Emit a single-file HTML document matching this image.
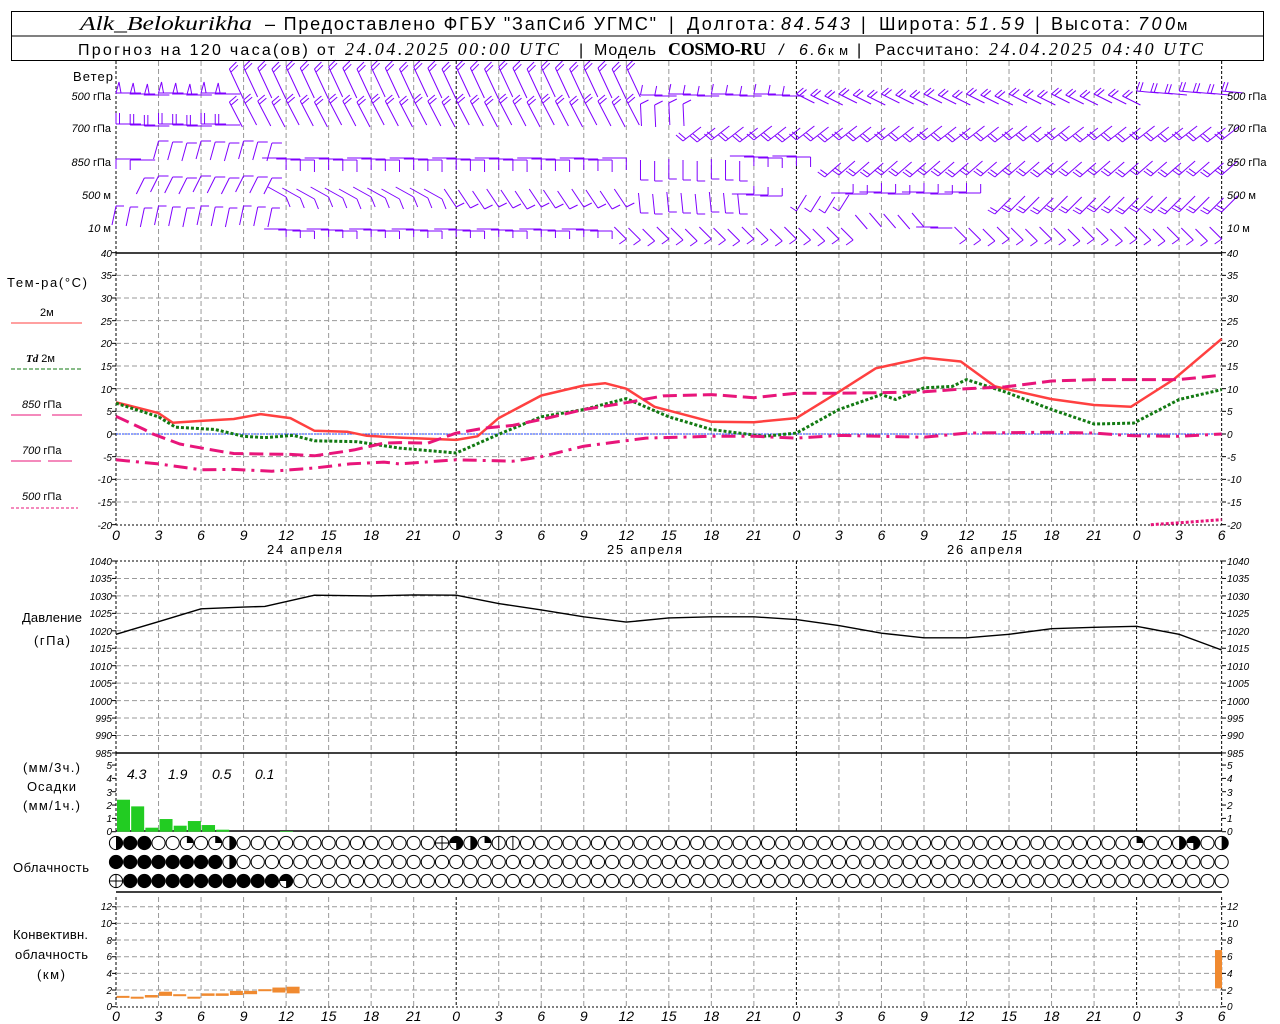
<!DOCTYPE html>
<html><head><meta charset="utf-8"><style>
html,body{margin:0;padding:0;background:#fff;width:1280px;height:1024px;overflow:hidden}
svg{display:block}
text{font-family:"Liberation Sans","DejaVu Sans",sans-serif;fill:#000}
.t{font-size:13px}
.n{font-size:10px;font-style:italic}
.h{font-size:14px;font-style:italic}
.it{font-style:italic}
</style></head><body>
<svg id="s" width="1280" height="1024" viewBox="0 0 1280 1024" xmlns="http://www.w3.org/2000/svg">
<rect x="0" y="0" width="1280" height="1024" fill="#fff"/>
<g id="g"></g>
<!-- header -->
<rect x="11.5" y="11.5" width="1252" height="49" fill="none" stroke="#000"/>
<line x1="11" y1="36" x2="1264" y2="36" stroke="#000"/>
<g style="font-size:18px">
<text x="80" y="30" textLength="172" lengthAdjust="spacingAndGlyphs" style="font-family:'Liberation Serif',serif;font-style:italic;font-size:20px">Alk_Belokurikha</text>
<text x="265" y="30" textLength="391" lengthAdjust="spacing">– Предоставлено ФГБУ "ЗапСиб УГМС"</text>
<text x="669" y="30">|</text>
<text x="687" y="30" textLength="88" lengthAdjust="spacing">Долгота:</text>
<text x="781" y="30" textLength="69" lengthAdjust="spacing" class="it">84.543</text>
<text x="861" y="30">|</text>
<text x="879" y="30" textLength="81" lengthAdjust="spacing">Широта:</text>
<text x="966" y="30" textLength="58" lengthAdjust="spacing" class="it">51.59</text>
<text x="1035" y="30">|</text>
<text x="1051" y="30" textLength="79" lengthAdjust="spacing">Высота:</text>
<text x="1138" y="30" textLength="37" lengthAdjust="spacing" class="it">700</text>
<text x="1177" y="30" style="font-size:15px">м</text>
</g>
<g style="font-size:16px">
<text x="78" y="55" textLength="257" lengthAdjust="spacing">Прогноз на 120 часа(ов) от</text>
<text x="345" y="55" textLength="214" lengthAdjust="spacing" style="font-family:'Liberation Serif',serif;font-style:italic;font-size:18px">24.04.2025 00:00 UTC</text>
<text x="579" y="55">|</text>
<text x="594" y="55" textLength="62" lengthAdjust="spacing">Модель</text>
<text x="668" y="55" textLength="98" lengthAdjust="spacing" style="font-family:'Liberation Serif',serif;font-weight:bold;font-size:18px">COSMO-RU</text>
<text x="779" y="55" class="it">/</text>
<text x="799" y="55" textLength="27" lengthAdjust="spacing" class="it">6.6</text>
<text x="828" y="55" textLength="20" lengthAdjust="spacing" style="font-size:13px">км</text>
<text x="857" y="55">|</text>
<text x="875" y="55" textLength="104" lengthAdjust="spacing">Рассчитано:</text>
<text x="989" y="55" textLength="214" lengthAdjust="spacing" style="font-family:'Liberation Serif',serif;font-style:italic;font-size:18px">24.04.2025 04:40 UTC</text>
</g>
<!-- wind labels -->
<g class="t">
<text x="73" y="81" textLength="40" lengthAdjust="spacing">Ветер</text>
<text x="111" y="100" text-anchor="end" style="font-size:11px"><tspan class="it">500</tspan> гПа</text>
<text x="111" y="132" text-anchor="end" style="font-size:11px"><tspan class="it">700</tspan> гПа</text>
<text x="111" y="166" text-anchor="end" style="font-size:11px"><tspan class="it">850</tspan> гПа</text>
<text x="111" y="199" text-anchor="end" style="font-size:11px"><tspan class="it">500</tspan> м</text>
<text x="111" y="232" text-anchor="end" style="font-size:11px"><tspan class="it">10</tspan>   м</text>
<text x="1227" y="100" style="font-size:11px"><tspan class="it">500</tspan> гПа</text>
<text x="1227" y="132" style="font-size:11px"><tspan class="it">700</tspan> гПа</text>
<text x="1227" y="166" style="font-size:11px"><tspan class="it">850</tspan> гПа</text>
<text x="1227" y="199" style="font-size:11px"><tspan class="it">500</tspan>  м</text>
<text x="1227" y="232" style="font-size:11px"><tspan class="it">10</tspan>   м</text>
</g>
<!-- temp legend -->
<g class="t">
<text x="7" y="287" textLength="80" lengthAdjust="spacing">Тем-ра(°C)</text>
<text x="40" y="316" style="font-size:11px">2м</text>
<text x="26" y="362" style="font-size:11px"><tspan style="font-family:'Liberation Serif',serif;font-style:italic;font-weight:bold">Td</tspan>  2м</text>
<text x="22" y="408" style="font-size:11px"><tspan class="it">850</tspan> гПа</text>
<text x="22" y="454" style="font-size:11px"><tspan class="it">700</tspan> гПа</text>
<text x="22" y="500" style="font-size:11px"><tspan class="it">500</tspan> гПа</text>
<text x="22" y="622" textLength="60" lengthAdjust="spacing">Давление</text>
<text x="34" y="645" textLength="36" lengthAdjust="spacing">(гПа)</text>
<text x="23" y="772" textLength="57" lengthAdjust="spacing">(мм/3ч.)</text>
<text x="27" y="791" textLength="49" lengthAdjust="spacing">Осадки</text>
<text x="23" y="810" textLength="57" lengthAdjust="spacing">(мм/1ч.)</text>
<text x="13" y="872" textLength="76" lengthAdjust="spacing">Облачность</text>
<text x="13" y="939" textLength="75" lengthAdjust="spacing">Конвективн.</text>
<text x="15" y="959" textLength="73" lengthAdjust="spacing">облачность</text>
<text x="37" y="979" textLength="28" lengthAdjust="spacing">(км)</text>
<text x="267" y="554" textLength="75" lengthAdjust="spacing">24 апреля</text>
<text x="607" y="554" textLength="75" lengthAdjust="spacing">25 апреля</text>
<text x="947" y="554" textLength="75" lengthAdjust="spacing">26 апреля</text>
</g>
<g class="h">
<text x="127" y="779">4.3</text><text x="168" y="779">1.9</text><text x="212" y="779">0.5</text><text x="255" y="779">0.1</text>
</g>
<!-- time labels -->
<g class="h" text-anchor="middle">
<text y="540"><tspan x="116">0</tspan><tspan x="158.5">3</tspan><tspan x="201">6</tspan><tspan x="243.6">9</tspan><tspan x="286.1">12</tspan><tspan x="328.6">15</tspan><tspan x="371.2">18</tspan><tspan x="413.7">21</tspan><tspan x="456.2">0</tspan><tspan x="498.7">3</tspan><tspan x="541.3">6</tspan><tspan x="583.8">9</tspan><tspan x="626.3">12</tspan><tspan x="668.8">15</tspan><tspan x="711.4">18</tspan><tspan x="753.9">21</tspan><tspan x="796.4">0</tspan><tspan x="838.9">3</tspan><tspan x="881.5">6</tspan><tspan x="924">9</tspan><tspan x="966.5">12</tspan><tspan x="1009">15</tspan><tspan x="1051.6">18</tspan><tspan x="1094">21</tspan><tspan x="1136.6">0</tspan><tspan x="1179">3</tspan><tspan x="1221.7">6</tspan></text>
<text y="1021"><tspan x="116">0</tspan><tspan x="158.5">3</tspan><tspan x="201">6</tspan><tspan x="243.6">9</tspan><tspan x="286.1">12</tspan><tspan x="328.6">15</tspan><tspan x="371.2">18</tspan><tspan x="413.7">21</tspan><tspan x="456.2">0</tspan><tspan x="498.7">3</tspan><tspan x="541.3">6</tspan><tspan x="583.8">9</tspan><tspan x="626.3">12</tspan><tspan x="668.8">15</tspan><tspan x="711.4">18</tspan><tspan x="753.9">21</tspan><tspan x="796.4">0</tspan><tspan x="838.9">3</tspan><tspan x="881.5">6</tspan><tspan x="924">9</tspan><tspan x="966.5">12</tspan><tspan x="1009">15</tspan><tspan x="1051.6">18</tspan><tspan x="1094">21</tspan><tspan x="1136.6">0</tspan><tspan x="1179">3</tspan><tspan x="1221.7">6</tspan></text>
</g>
<!-- y tick labels -->
<g class="n" text-anchor="end">
<text x="112" y="257">40</text><text x="112" y="279">35</text><text x="112" y="302">30</text><text x="112" y="325">25</text><text x="112" y="347">20</text><text x="112" y="370">15</text><text x="112" y="393">10</text><text x="112" y="415">5</text><text x="112" y="438">0</text><text x="112" y="461">-5</text><text x="112" y="483">-10</text><text x="112" y="506">-15</text><text x="112" y="529">-20</text>
<text x="112" y="565">1040</text><text x="112" y="582">1035</text><text x="112" y="600">1030</text><text x="112" y="617">1025</text><text x="112" y="635">1020</text><text x="112" y="652">1015</text><text x="112" y="670">1010</text><text x="112" y="687">1005</text><text x="112" y="705">1000</text><text x="112" y="722">995</text><text x="112" y="739">990</text><text x="112" y="757">985</text>
<text x="112" y="769">5</text><text x="112" y="782">4</text><text x="112" y="796">3</text><text x="112" y="809">2</text><text x="112" y="822">1</text><text x="112" y="835">0</text>
<text x="112" y="910">12</text><text x="112" y="927">10</text><text x="112" y="944">8</text><text x="112" y="960">6</text><text x="112" y="977">4</text><text x="112" y="994">2</text><text x="112" y="1010">0</text>
</g>
<g class="n">
<text x="1227" y="257">40</text><text x="1227" y="279">35</text><text x="1227" y="302">30</text><text x="1227" y="325">25</text><text x="1227" y="347">20</text><text x="1227" y="370">15</text><text x="1227" y="393">10</text><text x="1227" y="415">5</text><text x="1227" y="438">0</text><text x="1227" y="461">-5</text><text x="1227" y="483">-10</text><text x="1227" y="506">-15</text><text x="1227" y="529">-20</text>
<text x="1227" y="565">1040</text><text x="1227" y="582">1035</text><text x="1227" y="600">1030</text><text x="1227" y="617">1025</text><text x="1227" y="635">1020</text><text x="1227" y="652">1015</text><text x="1227" y="670">1010</text><text x="1227" y="687">1005</text><text x="1227" y="705">1000</text><text x="1227" y="722">995</text><text x="1227" y="739">990</text><text x="1227" y="757">985</text>
<text x="1227" y="769">5</text><text x="1227" y="782">4</text><text x="1227" y="796">3</text><text x="1227" y="809">2</text><text x="1227" y="822">1</text><text x="1227" y="835">0</text>
<text x="1227" y="910">12</text><text x="1227" y="927">10</text><text x="1227" y="944">8</text><text x="1227" y="960">6</text><text x="1227" y="977">4</text><text x="1227" y="994">2</text><text x="1227" y="1010">0</text>
</g>
</svg>
<script>
(function(){
var NS="http://www.w3.org/2000/svg",g=document.getElementById("g");
function el(n,a){var e=document.createElementNS(NS,n);for(var k in a)e.setAttribute(k,a[k]);g.appendChild(e);return e;}
function X(h){return 116+h*14.175;}
function ln(x1,y1,x2,y2,c,w,d){var a={x1:x1,y1:y1,x2:x2,y2:y2,stroke:c,"stroke-width":w||1};if(d)a["stroke-dasharray"]=d;return el("line",a);}
var GR="#9a9a9a";
var panels=[[61,253],[253,525],[561,753],[753,831],[897,1007]];
for(var h=0;h<=78;h+=3){var day=(h%24==0||h==78);
 panels.forEach(function(p){ln(X(h),p[0],X(h),p[1],day?"#000":GR,1,day?"3,2":"5,3");});}
for(var t=35;t>=-15;t-=5){var y=434-t*4.533;ln(116,y,1222,y,GR,1,"5,3");}
ln(116,525,1222,525,"#000",1,"2,2");
for(var p=1035;p>=990;p-=5){var y=561+(1040-p)*3.49;ln(116,y,1222,y,GR,1,"5,3");}
ln(116,561,1222,561,"#000",1,"2,2");
for(var c=2;c<=12;c+=2){var y=1006.7-c*8.33;ln(116,y,1222,y,GR,1,"5,3");}
ln(116,1007,1222,1007,"#000",1,"2,2");
[253,753,831,892].forEach(function(y){ln(116,y,1222,y,"#000",1.5);});
function ticks(vals,f){vals.forEach(function(v){var y=f(v);ln(112,y,116,y,"#000");ln(1222,y,1226,y,"#000");});}
ticks([40,35,30,25,20,15,10,5,0,-5,-10,-15,-20],function(t){return 434-t*4.533;});
ticks([1040,1035,1030,1025,1020,1015,1010,1005,1000,995,990,985],function(p){return 561+(1040-p)*3.49;});
ticks([0,1,2,3,4,5],function(v){return 831.7-v*13.33;});
ticks([0,2,4,6,8,10,12],function(v){return 1006.7-v*8.33;});
ln(116,434,1222,434,"#2244ff",1,"2,1");
ln(11,323,82,323,"#ff4040",1);
ln(11,369,82,369,"#127a12",1,"4,2");
ln(11,415,41,415,"#e8157a",1);ln(52,415,82,415,"#e8157a",1);
ln(11,461,42,461,"#e8157a",1,"30,6,2,6");ln(48,461,78,461,"#e8157a",1,"24,6,2,6");
ln(11,508,78,508,"#e8157a",1,"3,2");
function curve(pts,c,w,d,f){var s="";pts.forEach(function(q){s+=X(q[0]).toFixed(1)+","+f(q[1]).toFixed(1)+" ";});
 var a={points:s,fill:"none",stroke:c,"stroke-width":w,"stroke-linejoin":"round"};if(d)a["stroke-dasharray"]=d;el("polyline",a);}
var TY=function(t){return 434-t*4.533;};
curve([[0,7],[3,4.6],[4,2.5],[6,2.9],[8.3,3.3],[10.2,4.4],[12.3,3.5],[14,0.7],[16.3,0.5],[17.7,-0.4],[20,-0.8],[24,-1.3],[25.5,-0.5],[27,3.5],[30,8.5],[33,10.7],[34.5,11.2],[36,10],[38,6],[42,2.7],[45,2.6],[48,3.5],[51,9.3],[53.6,14.5],[57,16.8],[59.6,16],[62,10.5],[66,7.7],[69,6.4],[71.6,6],[74.6,12],[78,21]],"#ff4040",2.5,null,TY);
curve([[0,6.8],[3,3.8],[4.2,1.5],[7,1],[9,-0.5],[10.5,-0.8],[12.5,-0.3],[14,-1.5],[17,-1.7],[20,-3.1],[24,-4.2],[27.2,0.2],[30,3.8],[33,5.4],[36,7.8],[39,3.8],[42,1],[45.7,-0.5],[48,0.2],[51,5.4],[54,8.7],[55,7.6],[57,10.2],[59,10.5],[60,12],[62.7,9.3],[66,5.4],[69,2.2],[71.8,2.4],[75,7.6],[78,9.8]],"#127a12",3,"3,2",TY);
curve([[0,3.9],[2,1],[2.6,0],[4.5,-2.2],[5.5,-2.8],[7.3,-3.8],[8.3,-4.3],[12.3,-4.5],[14,-4.8],[16,-3.9],[16.8,-3.5],[18.9,-2],[20,-1.9],[22,-2],[24,0.2],[26,1.3],[28,1.9],[30,3.2],[33,5.4],[36,6.9],[38.6,8.4],[42,8.7],[45,8],[48,9],[51,9],[54,9.1],[57,9.3],[60,10],[62.7,10.4],[66,11.7],[69,12],[71.8,12],[75,12],[78,13]],"#e8157a",3,"14,6",TY);
curve([[0,-5.7],[3,-6.6],[6,-7.9],[8.3,-7.8],[11,-8.2],[14,-7.5],[16.5,-6.6],[18.9,-6.2],[20,-6.6],[24,-5.7],[28,-6],[30,-5],[33,-2.7],[37.4,-0.9],[42,-0.5],[45,-0.5],[48,-0.9],[51,-0.3],[54,-0.5],[57,-0.7],[60,0.2],[66,0.4],[69,0.2],[71.8,-0.4],[75,-0.5],[78,0]],"#e8157a",3,"14,6,3,6",TY);
curve([[73,-20],[75,-19.6],[78,-18.9]],"#e8157a",3,"3,2",TY);
curve([[0,1019],[3,1022.6],[6,1026.3],[9,1026.8],[10.5,1027],[14,1030.2],[18,1030],[21,1030.3],[24,1030.2],[27,1027.8],[30,1026],[33,1024],[36,1022.5],[39,1023.7],[42,1024],[45,1024],[48,1023.2],[51,1021.5],[54,1019.3],[57,1018],[60,1018],[63,1019],[66,1020.6],[69,1021],[72,1021.3],[75,1019],[78,1014.5]],"#000",1.4,null,function(p){return 561+(1040-p)*3.49;});
[[0,2.4],[1,1.9],[2,0.3],[3,0.95],[4,0.45],[5,0.8],[6,0.5],[7,0.15],[11.5,0.05]].forEach(function(b){var v=b[1]*13.33;el("rect",{x:X(b[0])+1,y:831.7-v,width:13,height:v,fill:"#22cc22"});});
[[0,1.2,1.3],[1,1.0,1.2],[2,1.1,1.4],[3,1.3,1.8],[4,1.3,1.5],[5,1.1,1.2],[6,1.3,1.6],[7,1.3,1.6],[8,1.4,1.9],[9,1.5,1.9],[10,2.0,2.1],[11,1.7,2.3],[12,1.6,2.4]].forEach(function(b){el("rect",{x:X(b[0])+0.5,y:1006.7-b[2]*8.33,width:13,height:Math.max(2,(b[2]-b[1])*8.33),fill:"#f08a30"});});
el("rect",{x:1215,y:1006.7-6.8*8.33,width:7,height:4.6*8.33,fill:"#f08a30"});
function cloud(cx,cy,s){var r=6.6;
 el("ellipse",{cx:cx,cy:cy,rx:r,ry:r,fill:s==4?"#000":"#fff",stroke:"#000","stroke-width":1});
 if(s==1)el("path",{d:"M"+cx+","+cy+" L"+cx+","+(cy-r)+" A"+r+","+r+" 0 0 1 "+(cx+r)+","+cy+" Z",fill:"#000"});
 if(s==2)el("path",{d:"M"+cx+","+(cy-r)+" A"+r+","+r+" 0 0 1 "+cx+","+(cy+r)+" Z",fill:"#000"});
 if(s==3)el("path",{d:"M"+cx+","+cy+" L"+(cx-r)+","+cy+" A"+r+","+r+" 0 1 1 "+cx+","+(cy+r)+" Z",fill:"#000"});
 if(s==5)ln(cx,cy-r,cx,cy+r,"#000");
 if(s==6){ln(cx,cy-r,cx,cy+r,"#000");ln(cx-r,cy,cx+r,cy,"#000");}}
var r1={0:2,1:4,2:4,5:1,7:1,8:2,23:6,24:3,25:2,26:1,27:5,28:5,72:1,75:2,76:3,78:2};
var r2={8:2};for(var i=0;i<8;i++)r2[i]=4;
var r3={0:6,12:3};for(var i=1;i<12;i++)r3[i]=4;
for(var h=0;h<=78;h++){cloud(X(h),843,r1[h]||0);cloud(X(h),862,r2[h]||0);cloud(X(h),881,r3[h]||0);}
var PC="#7f00ff";
function barb(hx,hy,sx,sy,bx,by,n,flag){
 ln(hx,hy,hx+sx,hy+sy,PC,1);
 var L=Math.sqrt(sx*sx+sy*sy)||1,ux=sx/L,uy=sy/L;
 for(var k=0;k<n;k++){var px=hx+ux*k*3.5,py=hy+uy*k*3.5;
  if(flag&&k==0)el("polygon",{points:px+","+py+" "+(px+bx)+","+(py+by)+" "+(px+ux*5)+","+(py+uy*5),fill:"none",stroke:PC,"stroke-width":1});
  else ln(px,py,px+bx,py+by,PC,1);}}
var W=[
[0,7,94,25,0,3,-11,1,1],[8,36,68,14,30,7,-7,2],[37,48,95,22,0,2,-10,1],[48,72,95,18,9,7,-6,2],[72,78,92,22,2,3,-9,2],
[0,7,125,25,0,0,-11,2],[8,37,101,13,25,7,-6,2],[37,40,104,1,22,8,-4,1],[40,78,141,18,-14,-7,-6,2],
[0,1,160,25,0,0,10,1],[3,12,142,-5,18,10,0,1],[12,37,159,-24,0,0,12,1],[37,45,180,0,-20,8,0,1],[45,50,157,-24,0,0,10,1],[50,78,176,16,-14,-7,-5,2],
[2,12,177,-8,16,10,0,1],[12,24,198,-18,-10,4,10,1],[24,37,208,-12,-18,8,-4,1],[37,45,213,-2,-20,8,0,1],[45,48,195,-22,0,0,-8,1],[48,52,212,10,-16,-6,-4,1],[52,61,193,-22,0,0,-9,1],[62,78,213,16,-16,-7,-4,2],
[0,12,207,-4,19,8,0,1],[12,36,230,-22,0,0,8,1],[36,53,240,-12,-12,-7,5,1],[53,58,228,-12,-14,0,0,0],[58,60,227,-22,0,0,0,0],[60,78,240,-12,-12,-7,5,1]];
W.forEach(function(s){for(var h=s[0];h<=s[1];h++){if(h==s[1]&&W.some(function(o){return o!==s&&o[0]==h&&o[2]>s[2]-25&&o[2]<s[2]+25;}))continue;
 barb(X(h),s[2]+((h*7)%3)-1,s[3],s[4],s[5],s[6],s[7],s[8]);}});
})();
</script>
</body></html>
